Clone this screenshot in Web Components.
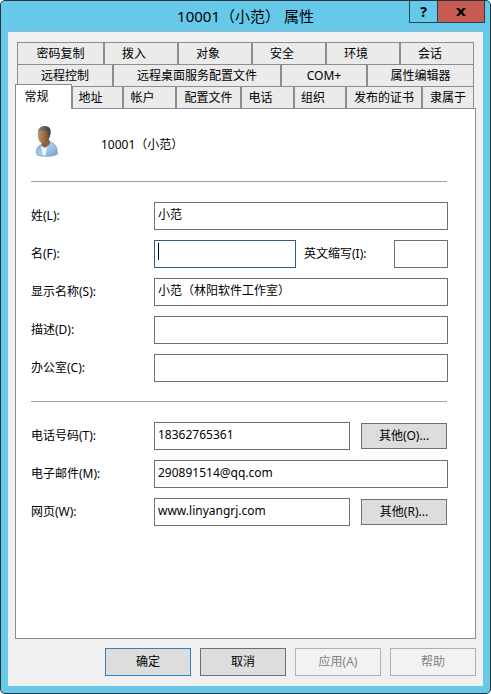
<!DOCTYPE html>
<html lang="zh-CN">
<head>
<meta charset="UTF-8">
<meta name="viewport" content="width=device-width, initial-scale=1.0">
<title>10001（小范） 属性</title>
<style>
  body {
    margin: 0;
    font: 12px/16px "Noto Sans", "Noto Sans CJK SC", sans-serif;
    color: #000;
    background: #fff;
  }
</style>
</head>
<body>
<property-dialog heading="10001（小范） 属性">
  <tab-strip>
    <tab-row>
      <tab-item style="--w: 87">密码复制</tab-item>
      <tab-item style="--w: 74" short>拨入</tab-item>
      <tab-item style="--w: 74" short>对象</tab-item>
      <tab-item style="--w: 74" short>安全</tab-item>
      <tab-item style="--w: 74" short>环境</tab-item>
      <tab-item style="--w: 74" short>会话</tab-item>
    </tab-row>
    <tab-row>
      <tab-item style="--w: 96">远程控制</tab-item>
      <tab-item style="--w: 168">远程桌面服务配置文件</tab-item>
      <tab-item style="--w: 86">COM+</tab-item>
      <tab-item style="--w: 107">属性编辑器</tab-item>
    </tab-row>
    <tab-row>
      <tab-item style="--w: 57" short active>常规</tab-item>
      <tab-item style="--w: 51" short>地址</tab-item>
      <tab-item style="--w: 53" short>帐户</tab-item>
      <tab-item style="--w: 65">配置文件</tab-item>
      <tab-item style="--w: 53" short>电话</tab-item>
      <tab-item style="--w: 52" short>组织</tab-item>
      <tab-item style="--w: 76">发布的证书</tab-item>
      <tab-item style="--w: 52">隶属于</tab-item>
    </tab-row>
  </tab-strip>
  <tab-panel>
    <user-header>10001（小范）</user-header>
    <form-section>
      <form-field label="姓(L):" value="小范"></form-field>
      <form-field label="名(F):" focused>
        <form-field label="英文缩写(I):" compact></form-field>
      </form-field>
      <form-field label="显示名称(S):" value="小范（林阳软件工作室）"></form-field>
      <form-field label="描述(D):"></form-field>
      <form-field label="办公室(C):"></form-field>
    </form-section>
    <form-section>
      <form-field label="电话号码(T):" value="18362765361">
        <push-button small>其他(O)...</push-button>
      </form-field>
      <form-field label="电子邮件(M):" value="290891514@qq.com"></form-field>
      <form-field label="网页(W):" value="www.linyangrj.com">
        <push-button small>其他(R)...</push-button>
      </form-field>
    </form-section>
  </tab-panel>
  <push-button slot="actions" primary>确定</push-button>
  <push-button slot="actions">取消</push-button>
  <push-button slot="actions" disabled>应用(A)</push-button>
  <push-button slot="actions" disabled>帮助</push-button>
</property-dialog>

<script>
class PropertyDialog extends HTMLElement {
  connectedCallback() {
    this.attachShadow({ mode: 'open' });
    this.shadowRoot.innerHTML = `
      <style>
        :host {
          display: flex;
          flex-direction: column;
          box-sizing: border-box;
          min-height: 100vh;
          padding: 0 7px 7px;
          border: 1px solid #2c3338;
          border-radius: 5px;
          background: #66c9ea;
        }
        header {
          display: grid;
          grid-template-columns: 1fr auto 1fr;
          height: 30px;
        }
        h1 {
          grid-column: 2;
          margin: 0;
          font-size: 15px;
          font-weight: 400;
          line-height: 30px;
        }
        .controls {
          display: flex;
          justify-self: end;
          height: 22px;
          margin-right: -2px;
          box-sizing: border-box;
          border: 1px solid #24434f;
          border-top: 0;
        }
        .controls button {
          display: grid;
          place-items: center;
          padding: 0;
          border: 0;
          background: none;
          color: #000;
          font: bold 14px/20px "Noto Sans", sans-serif;
        }
        .help {
          width: 27px;
        }
        .controls .close {
          width: 47px;
          border-left: 1px solid #24434f;
          background: #c75b52;
        }
        main {
          flex: 1;
          display: flex;
          flex-direction: column;
          padding: 10px 7px;
          border-top: 1px solid #8fb9c9;
          background: #f0f0f0;
        }
        footer {
          display: flex;
          justify-content: flex-end;
          gap: 9px;
          margin-top: 9px;
        }
      </style>
      <header>
        <h1></h1>
        <div class="controls">
          <button class="help" type="button">?</button>
          <button class="close" type="button" aria-label="关闭">
            <svg width="10" height="8" viewBox="0 0 10 8"><path d="M0 0h3l2 2.300L7 0h3L6.600 4 10 8H7L5 5.600 3 8H0l3.400-4z"/></svg>
          </button>
        </div>
      </header>
      <main>
        <slot></slot>
        <footer><slot name="actions"></slot></footer>
      </main>
    `;
    this.shadowRoot.querySelector('h1').textContent = this.getAttribute('heading');
  }
}

class TabStrip extends HTMLElement {
  connectedCallback() {
    this.attachShadow({ mode: 'open' });
    this.shadowRoot.innerHTML = `
      <style>
        :host {
          display: block;
          margin: 0 2px;
        }
      </style>
      <slot></slot>
    `;
  }
}

class TabRow extends HTMLElement {
  connectedCallback() {
    this.setAttribute('role', 'tablist');
    this.attachShadow({ mode: 'open' });
    this.shadowRoot.innerHTML = `
      <style>
        :host {
          display: flex;
          height: 22px;
        }
      </style>
      <slot></slot>
    `;
  }
}

class TabItem extends HTMLElement {
  connectedCallback() {
    this.attachShadow({ mode: 'open' });
    this.shadowRoot.innerHTML = `
      <style>
        :host {
          display: flex;
          flex: var(--w) 1 0;
          min-width: 0;
        }
        button {
          flex: 1;
          min-width: 0;
          padding: 0;
          border: 1px solid #8b8c95;
          border-bottom: 0;
          background: #ebebeb;
          color: inherit;
          font: inherit;
          white-space: nowrap;
        }
        :host([short]) button {
          padding-right: 14px;
        }
        /* the selected tab is larger and covers the edge of the panel */
        :host([active]) {
          position: relative;
          z-index: 1;
          margin: -2px 0 -1px -2px;
        }
        :host([active]) button {
          background: #fff;
        }
      </style>
      <button type="button" role="tab"><slot></slot></button>
    `;
    this.shadowRoot.querySelector('button').setAttribute('aria-selected', this.hasAttribute('active'));
  }
}

class TabPanel extends HTMLElement {
  connectedCallback() {
    this.setAttribute('role', 'tabpanel');
    this.attachShadow({ mode: 'open' });
    this.shadowRoot.innerHTML = `
      <style>
        :host {
          display: block;
          flex: 1;
          padding: 16px 27px 16px 15px;
          border: 1px solid #8b8c95;
          background: #fff;
        }
      </style>
      <slot></slot>
    `;
  }
}

class UserHeader extends HTMLElement {
  connectedCallback() {
    this.attachShadow({ mode: 'open' });
    this.shadowRoot.innerHTML = `
      <style>
        :host {
          display: flex;
          align-items: center;
          gap: 42px;
          padding: 0 0 5px 4px;
        }
        svg {
          flex: none;
        }
        .name {
          padding-top: 8px;
        }
      </style>
      <svg width="24" height="32" viewBox="0 0 24 32" aria-hidden="true">
        <defs>
          <linearGradient id="skin" x1="0" x2="1">
            <stop offset="0" stop-color="#c39468"/>
            <stop offset=".5" stop-color="#9c6d47"/>
            <stop offset="1" stop-color="#6b4730"/>
          </linearGradient>
          <linearGradient id="shirt" x1="0" y1="0" x2="1" y2="1">
            <stop offset="0" stop-color="#7ba9d4"/>
            <stop offset=".5" stop-color="#a4cbee"/>
            <stop offset="1" stop-color="#6f9dca"/>
          </linearGradient>
          <linearGradient id="hair" x1="0" x2="1">
            <stop offset="0" stop-color="#858585"/>
            <stop offset="1" stop-color="#3c3c3c"/>
          </linearGradient>
        </defs>
        <ellipse cx="13" cy="29" rx="11" ry="2.5" fill="#000" opacity=".15"/>
        <path d="M1.500 29C1 24.500 2 21.500 5.500 20l9-3.500C19.500 18 22 21 22.300 27.500c0 2.500-4.600 3.800-10.300 3.800C7 31.300 2.500 31 1.500 29z" fill="url(#shirt)" stroke="#6a94bc" stroke-width=".6"/>
        <path d="M6 20.500l3 2.500 3.500-3.500-2 11-2.800-.2z" fill="#f3f8fc"/>
        <path d="M6.500 15h8.300v3.800c-1 1.700-3 3.200-5 4L6.500 20.500z" fill="#8a5f40"/>
        <path d="M3 5.500C5 3 13 3 14.800 6c1 4-.2 8.500-2.800 11-1.500 1.500-5 1.800-6.800.2C3 15 2.500 10 3 5.500z" fill="url(#skin)"/>
        <path d="M3.200 6C3.500 3 5.500 1.200 9 1c4.500-.2 6.700 2 6.700 5.500 0 2.500-.6 4.500-1.500 6l-.8-3.500c-.8-.8-1.200-1.700-1.300-3C9.500 5.200 6 5.200 3.200 6z" fill="url(#hair)"/>
      </svg>
      <span class="name"><slot></slot></span>
    `;
  }
}

class FormSection extends HTMLElement {
  connectedCallback() {
    this.attachShadow({ mode: 'open' });
    this.shadowRoot.innerHTML = `
      <style>
        :host {
          display: block;
        }
        hr {
          height: 1px;
          margin: 19px 1px 20px 0;
          border: 0;
          background: #a0a0a0;
        }
        .rows {
          display: flex;
          flex-direction: column;
          gap: 10px;
        }
      </style>
      <hr>
      <div class="rows"><slot></slot></div>
    `;
  }
}

class FormField extends HTMLElement {
  connectedCallback() {
    this.attachShadow({ mode: 'open' });
    this.shadowRoot.innerHTML = `
      <style>
        :host {
          display: flex;
          flex: 1;
          align-items: center;
        }
        label {
          flex: none;
          width: 123px;
        }
        .box {
          position: relative;
          flex: 1;
          min-width: 0;
        }
        input {
          display: block;
          box-sizing: border-box;
          width: 100%;
          height: 28px;
          padding: 0 3px 4px;
          border: 1px solid #707070;
          border-radius: 0;
          outline: 0;
          background: #fff;
          color: inherit;
          font: inherit;
        }
        :host([focused]) input {
          border-color: #2a5f8f;
        }
        .caret {
          position: absolute;
          top: 3px;
          left: 4px;
          width: 1px;
          height: 17px;
          background: #000;
        }
        :host([compact]) {
          flex: none;
          margin-left: 8px;
        }
        :host([compact]) label {
          width: 90px;
        }
        :host([compact]) .box {
          flex: none;
          width: 54px;
        }
      </style>
      <label for="field"></label>
      <div class="box">
        <input id="field" type="text">
        ${this.hasAttribute('focused') ? '<span class="caret"></span>' : ''}
      </div>
      <slot></slot>
    `;
    this.shadowRoot.querySelector('label').textContent = this.getAttribute('label');
    this.shadowRoot.querySelector('input').value = this.getAttribute('value') || '';
  }
}

class PushButton extends HTMLElement {
  connectedCallback() {
    this.attachShadow({ mode: 'open' });
    this.shadowRoot.innerHTML = `
      <style>
        :host {
          display: block;
          flex: none;
        }
        button {
          display: block;
          box-sizing: border-box;
          width: 86px;
          height: 28px;
          padding: 0;
          border: 1px solid #707070;
          border-radius: 0;
          background: #ddd;
          color: inherit;
          font: inherit;
        }
        :host([small]) {
          margin: 0 1px 0 11px;
        }
        :host([small]) button {
          height: 26px;
        }
        :host([primary]) button {
          border-color: #3580b8;
        }
        button:disabled {
          border-color: #adb2b5;
          background: #f2f2f2;
          color: #838383;
        }
      </style>
      <button type="button"><slot></slot></button>
    `;
    this.shadowRoot.querySelector('button').disabled = this.hasAttribute('disabled');
  }
}

customElements.define('property-dialog', PropertyDialog);
customElements.define('tab-strip', TabStrip);
customElements.define('tab-row', TabRow);
customElements.define('tab-item', TabItem);
customElements.define('tab-panel', TabPanel);
customElements.define('user-header', UserHeader);
customElements.define('form-section', FormSection);
customElements.define('form-field', FormField);
customElements.define('push-button', PushButton);
</script>
</body>
</html>
